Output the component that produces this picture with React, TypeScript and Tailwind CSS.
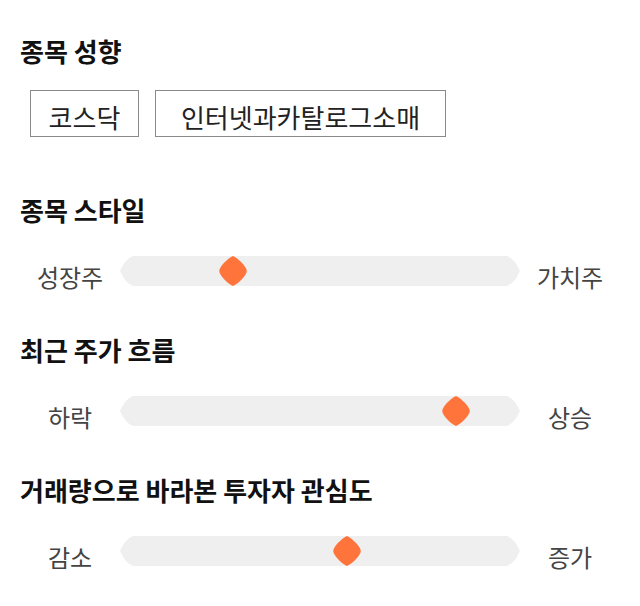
import React from "react";

function Track() {
  return (
    <svg width="400" height="30" viewBox="0 0 400 30" className="absolute inset-0">
      <path
        d="M13 0 H387 Q395 3 400 15 Q395 27 387 30 H13 Q5 27 0 15 Q5 3 13 0 Z"
        fill="#efefef"
      />
    </svg>
  );
}

function Thumb({ left }: { left: number }) {
  return (
    <svg
      width="30"
      height="30"
      viewBox="0 0 30 30"
      className="absolute top-0"
      style={{ left }}
    >
      <path
        d="M15 0 C18.5 1.5 25 7 27.5 11.5 Q30 15 27.5 18.5 C25 23 18.5 28.5 15 30 C11.5 28.5 5 23 2.5 18.5 Q0 15 2.5 11.5 C5 7 11.5 1.5 15 0 Z"
        fill="#ff743a"
      />
    </svg>
  );
}

function SliderRow({ left, right, pos }: { left: string; right: string; pos: number }) {
  return (
    <div className="flex items-start">
      <div className="w-[100px] pt-[6px] text-center text-[24px] leading-[30px] text-[#444]">{left}</div>
      <div className="relative h-[30px] w-[400px]">
        <Track />
        <Thumb left={pos} />
      </div>
      <div className="w-[100px] pt-[6px] text-center text-[24px] leading-[30px] text-[#444]">{right}</div>
    </div>
  );
}

function Heading({ children, className }: { children: React.ReactNode; className?: string }) {
  return (
    <h2 className={"text-[26px] font-bold leading-[36px] text-[#111] " + (className ?? "")}>
      {children}
    </h2>
  );
}

export default function App() {
  return (
    <div className="w-[640px] h-[606px] bg-white px-[20px] pt-[33px] font-['Noto_Sans_CJK_KR',sans-serif]">
      <Heading>종목 성향</Heading>
      <div className="ml-[10px] mt-[21px] flex gap-[16px]">
        <div className="flex h-[47px] w-[109px] items-center justify-center border border-[#8a8a8a] pt-[6px] text-[26px] leading-[36px] text-[#222]">
          코스닥
        </div>
        <div className="flex h-[47px] w-[291px] items-center justify-center border border-[#8a8a8a] pt-[6px] text-[26px] leading-[36px] text-[#222]">
          인터넷과카탈로그소매
        </div>
      </div>

      <Heading className="mt-[55px]">종목 스타일</Heading>
      <div className="mt-[28px]">
        <SliderRow left="성장주" right="가치주" pos={98} />
      </div>

      <Heading className="mt-[40px]">최근 주가 흐름</Heading>
      <div className="mt-[28px]">
        <SliderRow left="하락" right="상승" pos={321} />
      </div>

      <Heading className="mt-[40px]">거래량으로 바라본 투자자 관심도</Heading>
      <div className="mt-[28px]">
        <SliderRow left="감소" right="증가" pos={212} />
      </div>
    </div>
  );
}
